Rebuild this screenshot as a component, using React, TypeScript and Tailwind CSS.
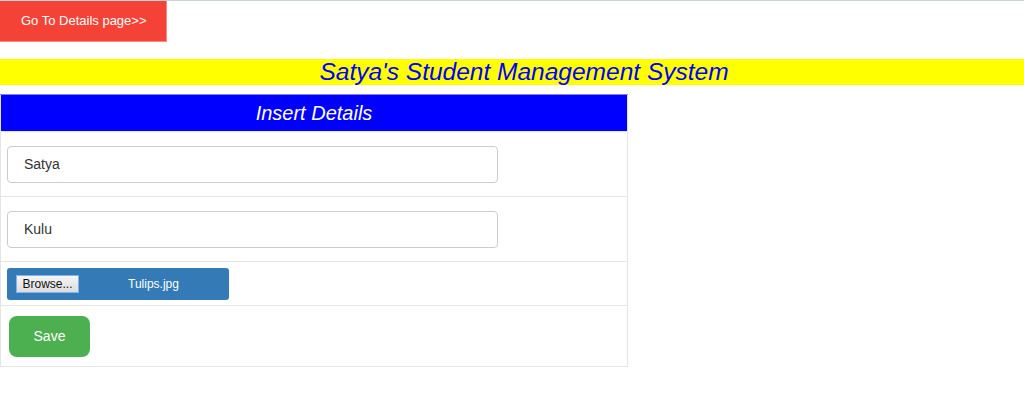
export default function App() {
  return (
    <div className="min-h-[396px] bg-white [font-family:'Liberation_Sans',Arial,sans-serif] border-t border-[#c9d3dd]">
      <button
        type="button"
        className="flex h-[41px] w-[167px] items-center pl-[21px] bg-[#f44336] text-[13px] text-white border-r border-b border-[#f88a82] [font-family:'Liberation_Sans',Arial,sans-serif]"
      >
        Go To Details page&gt;&gt;
      </button>

      <div className="mt-[17px] h-[26px] bg-[#ffff00] flex items-center justify-center pl-[24px]">
        <h1 className="text-[24.5px] italic text-[#0000ff] leading-none">Satya's Student Management System</h1>
      </div>

      <table className="mt-[9px] w-[628px] border-collapse border border-[#e5e5e5]">
        <tbody>
          <tr>
            <th className="h-[37px] bg-[#0000ff] border-t border-[#8080ff] text-[20px] italic font-normal text-white">
              Insert Details
            </th>
          </tr>
          <tr>
            <td className="h-[65px] border-t border-[#e5e5e5] px-[6px]">
              <input
                readOnly
                value="Satya"
                className="h-[37px] w-[491px] rounded-[4px] border border-[#cccccc] px-[16px] text-[14px] text-[#333] outline-none [font-family:'Liberation_Sans',Arial,sans-serif]"
              />
            </td>
          </tr>
          <tr>
            <td className="h-[65px] border-t border-[#e5e5e5] px-[6px]">
              <input
                readOnly
                value="Kulu"
                className="h-[37px] w-[491px] rounded-[4px] border border-[#cccccc] px-[16px] text-[14px] text-[#333] outline-none [font-family:'Liberation_Sans',Arial,sans-serif]"
              />
            </td>
          </tr>
          <tr>
            <td className="h-[44px] border-t border-[#e5e5e5] px-[6px]">
              <div className="flex h-[32px] w-[222px] items-center rounded-[3px] bg-[#337ab7] pl-[9px]">
                <span className="flex h-[18px] w-[63px] items-center justify-center border border-[#7eb4ea] bg-gradient-to-b from-[#f6f6f6] to-[#dcdcdc] text-[12px] text-[#111]">
                  Browse...
                </span>
                <span className="ml-[49px] text-[12px] text-white">Tulips.jpg</span>
              </div>
            </td>
          </tr>
          <tr>
            <td className="h-[61px] border-t border-[#e5e5e5] px-[8px]">
              <button
                type="button"
                className="h-[41px] w-[81px] rounded-[8px] bg-[#4caf50] text-[14px] text-white [font-family:'Liberation_Sans',Arial,sans-serif]"
              >
                Save
              </button>
            </td>
          </tr>
        </tbody>
      </table>
    </div>
  )
}
